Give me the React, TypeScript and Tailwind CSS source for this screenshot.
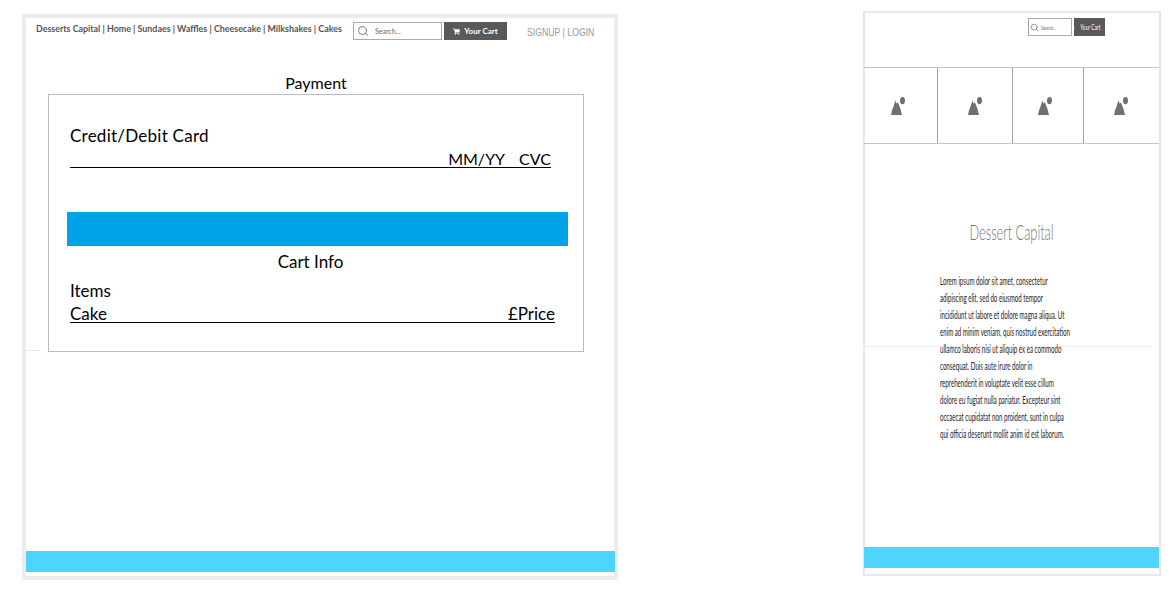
import { Search } from 'lucide-react';
import { FaShoppingCart } from 'react-icons/fa';

const paragraph = [
  'Lorem ipsum dolor sit amet, consectetur',
  'adipiscing elit, sed do eiusmod tempor',
  'incididunt ut labore et dolore magna aliqua. Ut',
  'enim ad minim veniam, quis nostrud exercitation',
  'ullamco laboris nisi ut aliquip ex ea commodo',
  'consequat. Duis aute irure dolor in',
  'reprehenderit in voluptate velit esse cillum',
  'dolore eu fugiat nulla pariatur. Excepteur sint',
  'occaecat cupidatat non proident, sunt in culpa',
  'qui officia deserunt mollit anim id est laborum.',
];

function ImageIcon() {
  return (
    <svg width="14" height="18" viewBox="0 0 14 18" fill="#707070">
      <path d="M0 18 L0.8 14 L3 8 L4.4 3.5 L5.6 6.5 L7 5.5 L9.5 12 L11 18 Z" />
      <ellipse cx="11.5" cy="3.6" rx="2.5" ry="3.6" />
    </svg>
  );
}

function Tile({ shift }: { shift: string }) {
  return (
    <div className="flex items-center justify-center border-r border-[#a0a0a0] last:border-r-0">
      <div className={shift}>
        <ImageIcon />
      </div>
    </div>
  );
}

export default function App() {
  return (
    <div className="flex items-start w-[1173px] h-[592px] overflow-hidden bg-white pt-[11px] pl-[22px] font-['Lato',sans-serif]">
      {/* payment page */}
      <div className="relative flex flex-col w-[596px] h-[566px] mt-[3px] border-4 border-[#ececec]">
        <div className="absolute left-[-4px] top-[332px] w-[18px] h-px bg-[#e8e8e8]" />
        <div className="flex items-center h-[18px] mt-1 ml-[10px] shrink-0">
          <div className="w-[317px] -mt-[4px] text-[8.9px] font-bold text-[#555] whitespace-nowrap">
            Desserts Capital | Home | Sundaes | Waffles | Cheesecake | Milkshakes | Cakes
          </div>
          <div className="flex items-center w-[89px] h-[18px] border border-[#aaa]">
            <Search size={12} strokeWidth={1.5} className="ml-[3px] text-[#555]" />
            <span className="ml-[6px] text-[7px] text-[#666]">Search...</span>
          </div>
          <div className="flex items-center justify-center gap-[4px] w-[63px] h-[18px] ml-[2px] bg-[#595959] text-white text-[8px] font-bold">
            <FaShoppingCart size={7} />
            <span>Your Cart</span>
          </div>
          <div className="ml-[20px] mt-[3px] text-[10px] text-[#999] whitespace-nowrap origin-left scale-x-[0.87] font-['Liberation_Sans',sans-serif]">SIGNUP | LOGIN</div>
        </div>

        <div className="ml-[22px] mt-[33px] w-[536px] h-[21px] text-center text-[16px] leading-5 text-black">Payment</div>

        <div className="ml-[22px] w-[536px] h-[258px] border border-[#bbb] text-[17px] leading-5 text-black">
          <div className="ml-[21px] mt-[31px] tracking-[0.25px]">Credit/Debit Card</div>
          <div className="flex justify-end gap-[14px] ml-[21px] w-[481px] h-[22px] border-b border-black pt-[3px] text-[16px]">
            <span>MM/YY</span>
            <span>CVC</span>
          </div>
          <div className="ml-[18px] mt-[44px] w-[501px] h-[34px] bg-[#00a2e8]" />
          <div className="ml-[18px] w-[501px] mt-[6px] pr-[14px] text-center">Cart Info</div>
          <div className="ml-[21px] mt-[9px]">Items</div>
          <div className="flex justify-between ml-[21px] w-[485px] h-[22px] pt-[3px] border-b border-black">
            <span>Cake</span>
            <span>£Price</span>
          </div>
        </div>

        <div className="mt-auto mb-[4px] -mr-px h-[21px] bg-[#4fd5fb]" />
      </div>

      {/* mobile home page */}
      <div className="relative flex flex-col w-[298px] h-[565px] ml-[245px] border-2 border-[#e8e8e8]">
        <div className="absolute left-[-2px] top-[333px] w-[289px] h-px bg-[#eeeeee]" />
        <div className="flex h-[54px] pt-[5px] pl-[163px] shrink-0">
          <div className="flex items-center w-[44px] h-[18px] border border-[#aaa]">
            <Search size={9} strokeWidth={1.5} className="ml-[1px] text-[#555]" />
            <span className="ml-[2px] text-[6px] text-[#666] origin-left scale-x-[0.7]">Search...</span>
          </div>
          <div className="flex items-center justify-center gap-px w-[31px] h-[18px] ml-[2px] bg-[#595959] text-white text-[7px]">
            <FaShoppingCart size={5} />
            <span className="whitespace-nowrap scale-x-[0.7]">Your Cart</span>
          </div>
        </div>

        <div className="grid grid-cols-[74px_75px_71px_74px] h-[77px] w-[295px] -ml-px border-y border-[#c4c4c4] shrink-0">
          <Tile shift="mr-[6px]" />
          <Tile shift="ml-0" />
          <Tile shift="mr-[6px]" />
          <Tile shift="ml-0" />
        </div>

        <div className="mt-[76px] text-center">
          <span className="inline-block text-[22px] leading-6 font-light text-[#777] whitespace-nowrap scale-x-[0.58]">Dessert Capital</span>
        </div>

        <div className="mt-[27px] ml-[75px] w-[132px] text-[10.5px] leading-[17px] text-[#222]">
          {paragraph.map((line) => (
            <div key={line} className="whitespace-nowrap origin-left scale-x-[0.585]">{line}</div>
          ))}
        </div>

        <div className="mt-auto mb-[6px] -ml-px h-[21px] bg-[#4fd5fb]" />
      </div>
    </div>
  );
}
